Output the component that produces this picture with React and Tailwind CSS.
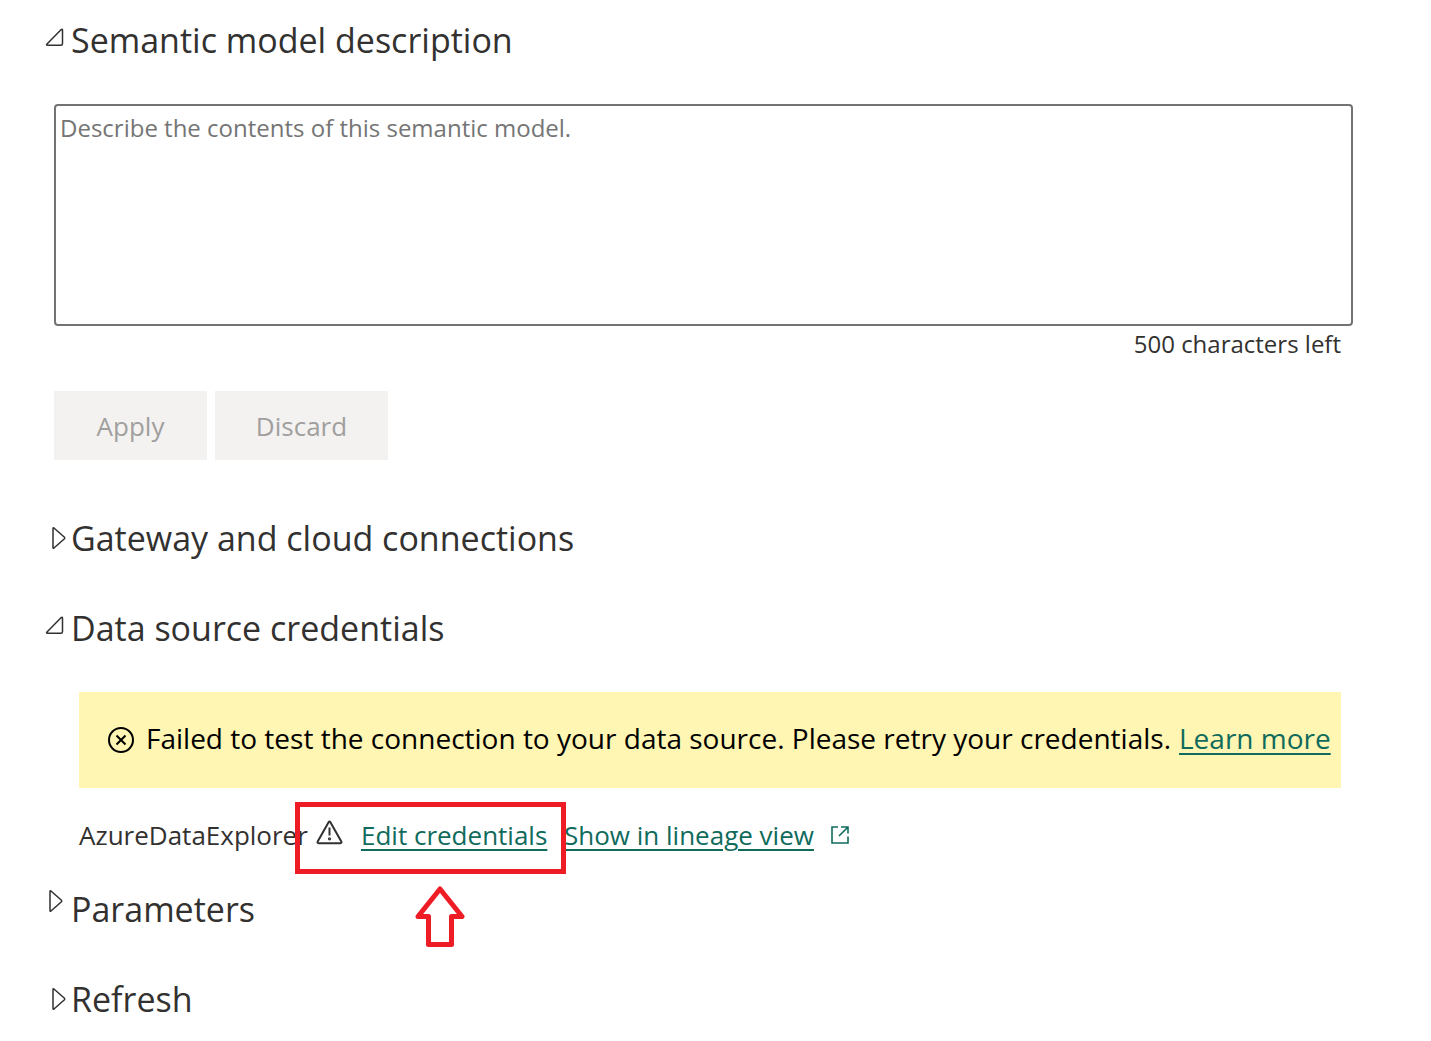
import React from "react";

function ExpandedIcon() {
  return (
    <svg width="20" height="20" viewBox="0 0 20 20" fill="none" stroke="currentColor" strokeWidth="1.5" strokeLinejoin="round" aria-hidden="true">
      <path d="M17.5 2 V15.5 Q17.5 17.3 16 17.3 H2.6 Q0.8 17.3 2 16 L16 1.7 Q17.5 0.6 17.5 2 Z" />
    </svg>
  );
}

function CollapsedIcon() {
  return (
    <svg width="14" height="24" viewBox="0 0 14 24" fill="none" stroke="currentColor" strokeWidth="1.5" strokeLinejoin="round" aria-hidden="true">
      <path d="M1 2.6 Q1 1.2 2.2 2.2 L12.2 11 Q13.2 12 12.2 13 L2.2 21.8 Q1 22.8 1 21.4 Z" />
    </svg>
  );
}

function SectionHeading({ title, expanded = false, raised = false }) {
  return (
    <h2 className="text-[34px] leading-[48px] text-[#323130]">
      <button type="button" aria-expanded={expanded} className="flex items-center whitespace-nowrap text-left">
        <span className={`flex w-[26px] shrink-0 ${expanded ? "pb-1" : raised ? "pb-4 pl-1" : "pl-[7px]"}`}>
          {expanded ? <ExpandedIcon /> : <CollapsedIcon />}
        </span>
        {title}
      </button>
    </h2>
  );
}

function Banner() {
  return (
    <div role="alert" className="flex h-24 items-center whitespace-nowrap bg-[#fef6b2] pl-7 text-[28px] leading-10 text-black">
      <svg className="mr-[11px] shrink-0" width="28" height="28" viewBox="0 0 28 28" fill="none" stroke="currentColor" strokeWidth="2" aria-hidden="true">
        <circle cx="14" cy="14" r="12" />
        <path d="M9.5 9.5 L18.5 18.5 M18.5 9.5 L9.5 18.5" />
      </svg>
      <span className="mr-2 pb-1">Failed to test the connection to your data source. Please retry your credentials.</span>
      <a href="#learn-more" className="pb-1 text-[#0f6b5c] underline decoration-2 underline-offset-4">Learn more</a>
    </div>
  );
}

function Callout() {
  return (
    <div className="pointer-events-none absolute -top-[15px] -left-[21px] flex w-[271px] flex-col items-center" aria-hidden="true">
      <div className="h-[72px] w-full border-5 border-[#ee1c25]" />
      <svg className="ml-[18px] mt-3" width="50" height="62" viewBox="0 0 50 62" fill="none" stroke="#ee1c25" strokeWidth="5" strokeLinejoin="round">
        <path d="M25 3 L47 30.5 H36.5 V58.5 H13.5 V30.5 H3 Z" />
      </svg>
    </div>
  );
}

export default function App() {
  const limit = 500;
  const [text, setText] = React.useState("");
  return (
    <main className="bg-white pt-4 pb-4 pl-[45px] pr-[78px] font-['Open_Sans','Noto_Sans',sans-serif] text-[#323130]">
      <SectionHeading title="Semantic model description" expanded />
      <div className="mt-10 pl-[9px]">
        <textarea
          aria-label="Semantic model description"
          value={text}
          maxLength={limit}
          onChange={(e) => setText(e.target.value)}
          placeholder="Describe the contents of this semantic model."
          className="block h-[222px] w-full resize-none rounded-[4px] border-2 border-[#737373] px-1 py-1 text-[24px] leading-9 outline-none placeholder:text-[#757575]"
        />
        <p className="pr-3 text-right text-[24px] leading-9">{limit - text.length} characters left</p>
        <div className="mt-[29px] flex gap-2 text-[26px] leading-9 text-[#a19f9d]">
          <button type="button" disabled className="h-[69px] w-[153px] bg-[#f3f2f1]">Apply</button>
          <button type="button" disabled className="h-[69px] w-[173px] bg-[#f3f2f1]">Discard</button>
        </div>
      </div>

      <div className="mt-[54px]">
        <SectionHeading title="Gateway and cloud connections" />
      </div>
      <div className="mt-[42px]">
        <SectionHeading title="Data source credentials" expanded />
      </div>
      <div className="mt-10 pl-[34px] pr-3">
        <Banner />
        <div className="flex h-[94px] items-center whitespace-nowrap text-[26px] leading-9">
          <span className="w-[237px]">AzureDataExplorer</span>
          <div className="relative flex w-[248px] items-center">
            <svg className="mr-[17px] mb-1 shrink-0" width="28" height="28" viewBox="0 0 28 28" fill="none" stroke="currentColor" strokeWidth="2" strokeLinejoin="round" aria-hidden="true">
              <path d="M12.6 3.2 Q13.5 1.6 14.4 3.2 L25.3 22.4 Q26 24 24.4 24.2 H2.6 Q1 24 1.7 22.4 Z" />
              <path d="M13.5 8.5 V16.5" />
              <circle cx="13.5" cy="19.8" r="0.6" />
            </svg>
            <a href="#edit-credentials" className="text-[#0f6b5c] underline decoration-2 underline-offset-4">Edit credentials</a>
            <Callout />
          </div>
          <a href="#lineage" className="flex items-center text-[#0f6b5c]">
            <span className="underline decoration-2 underline-offset-4">Show in lineage view</span>
            <svg className="ml-4" width="20" height="20" viewBox="0 0 20 20" fill="none" stroke="currentColor" strokeWidth="1.6" aria-hidden="true">
              <path d="M8 2 H2 V18 H18 V11.5" />
              <path d="M11 2 H18 V8.5 M18 2 L9 11" />
            </svg>
          </a>
        </div>
      </div>

      <div className="mt-[3px]">
        <SectionHeading title="Parameters" raised />
      </div>
      <div className="mt-[42px]">
        <SectionHeading title="Refresh" />
      </div>
    </main>
  );
}
